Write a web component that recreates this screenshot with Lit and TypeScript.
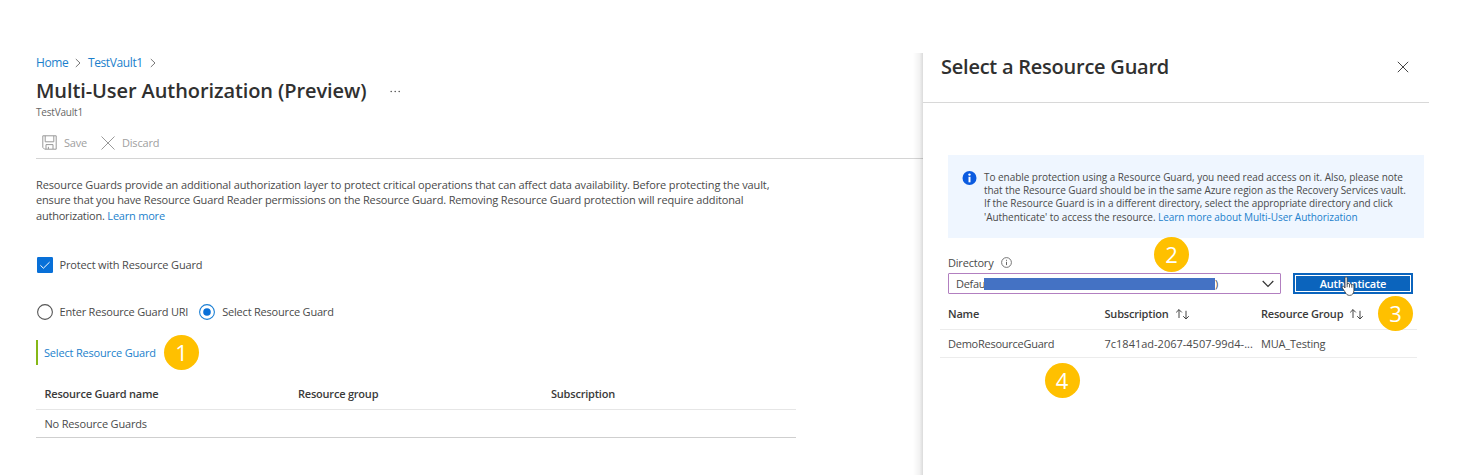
import { LitElement, html, css } from "lit";
import { customElement } from "lit/decorators.js";

const sortIcon = html`<svg class="sort" viewBox="0 0 15 12" width="15" height="12">
  <path d="M4 10V1.6M1.2 4.4L4 1.6l2.8 2.8M11 2.8v8.2M8.2 8.2l2.8 2.8 2.8-2.8" />
</svg>`;
const crumbIcon = html`<svg class="crumb" viewBox="0 0 6 10" width="6" height="10"><path d="M.8 1l4.2 4L.8 9" /></svg>`;

@customElement("app-root")
export class AppRoot extends LitElement {
  static styles = css`
    :host {
      display: block; position: relative; width: 1460px; height: 475px; overflow: hidden;
      background: #fff; color: #4a4a4a; font-family: "Open Sans", "Noto Sans", sans-serif; font-size: 11px;
    }
    * { box-sizing: border-box; }
    svg { display: block; fill: none; flex: none; }
    .page { display: grid; grid-template-columns: 923px 506px; padding-top: 53px; height: 475px; white-space: nowrap; }
    .link { color: #1b7fcc; }
    .main { padding-left: 36px; overflow: hidden; }
    .crumbs { display: flex; align-items: center; height: 19px; font-size: 12px; letter-spacing: -0.38px; }
    .crumb { stroke: #777; margin: 0 6.5px 0 7px; }
    .titlebar { display: flex; align-items: center; height: 36px; }
    h1, h2 { margin: 0; font-weight: 600; color: #303030; }
    h1 { font-size: 20px; letter-spacing: -0.09px; }
    .more { fill: #555; margin: 2px 0 0 24px; }
    .subtitle { height: 9px; line-height: 9px; font-size: 10px; color: #666; letter-spacing: -0.2px; }
    .toolbar { display: flex; align-items: center; margin-top: 10px; height: 32px; padding-left: 6px; border-bottom: 1px solid #d4d4d4; color: #a0a0a0; letter-spacing: -0.2px; }
    .toolbar svg { stroke: #999; }
    .save { margin: 0 14px 0 7px; }
    .discard { margin-left: 7px; }
    .copy { margin: 18px 0 0; line-height: 15.4px; }
    .c1 { letter-spacing: -0.12px; }
    .c2 { letter-spacing: -0.158px; }
    .c3 { letter-spacing: -0.21px; }
    .option { display: flex; align-items: center; height: 16px; padding-left: 0.5px; letter-spacing: -0.16px; }
    .check { margin-top: 34px; }
    .radios { margin-top: 31px; }
    .option span { margin: 0 0 2px 7px; }
    .option .second { margin-left: 11px; }
    .radios span { letter-spacing: -0.2px; }
    .pick { margin-top: 20px; height: 25px; border-left: 2px solid #86b817; padding-left: 6px; line-height: 25px; letter-spacing: -0.18px; }
    .grid { width: 760px; margin-top: 15px; }
    .row { display: grid; grid-template-columns: 253.5px 253px 1fr; padding-left: 8.5px; align-items: center; height: 28px; border-bottom: 1px solid #cfcfcf; letter-spacing: -0.17px; }
    .row.head { height: 30px; padding-bottom: 2px; font-weight: 600; border-color: #e6e6e6; color: #3a3a3a; letter-spacing: -0.21px; }
    .panel { position: relative; background: #fff; z-index: 1; }
    .panel::before { content: ""; position: absolute; left: -10px; top: 0; bottom: 0; width: 10px; background: linear-gradient(to left, rgba(0, 0, 0, .14), rgba(0, 0, 0, .05) 35%, transparent); }
    .panelhead { display: flex; justify-content: space-between; height: 50px; padding: 4px 20px 0 18px; border-bottom: 1px solid #d8d8d8; }
    h2 { font-size: 20px; line-height: 20px; letter-spacing: -0.24px; }
    .close { stroke: #444; margin-top: 4px; }
    .info { display: flex; margin: 52px 5px 0 25px; height: 83px; background: #eff6ff; padding: 16px 0 0 14px; font-size: 10px; line-height: 13.2px; }
    .infotext { margin-left: 7px; letter-spacing: -0.045px; }
    .i3 { letter-spacing: -0.052px; }
    .label { display: flex; align-items: center; margin: 15px 0 2px 25px; height: 18px; gap: 8px; letter-spacing: -0.2px; }
    .form { display: flex; margin-left: 25px; gap: 12px; }
    .select { display: flex; align-items: center; width: 333px; height: 21px; border: 1.5px solid #b27fc0; border-radius: 1px; padding: 0 6px 0 7px; }
    .def { width: 28px; letter-spacing: -0.3px; }
    .mask { width: 231px; height: 12px; background: #4472c4; z-index: 1; }
    .select svg { margin-left: auto; }
    .button { width: 120px; height: 21px; background: #0b64bd; border: 1px solid #0b64bd; outline: 1px solid #fff; outline-offset: -3px; color: #fff; font-weight: 600; text-align: center; line-height: 20px; letter-spacing: -0.2px; }
    .list { margin: 4px 12px 0 17px; }
    .item { display: grid; grid-template-columns: 156.5px 156.5px 1fr; align-items: center; height: 28px; padding-left: 8px; border-bottom: 1px solid #ececec; }
    .item.head { height: 32px; font-weight: 600; color: #3a3a3a; letter-spacing: -0.2px; }
    .guard { letter-spacing: -0.25px; }
    .group { letter-spacing: -0.2px; }
    .cell { display: flex; align-items: center; }
    .sort { stroke: #444; margin-left: 6px; }
    .badge { position: absolute; z-index: 2; width: 35px; height: 35px; border-radius: 50%; background: #ffc000; color: #fff; font-size: 22px; line-height: 35px; text-align: center; }
    .b1 { left: 164px; top: 335px; }
    .b2 { left: 1154px; top: 237px; }
    .b3 { left: 1378px; top: 296px; }
    .b4 { left: 1044.5px; top: 363px; }
    .cursor { position: absolute; z-index: 3; left: 1341px; top: 276px; }
  `;

  render() {
    return html`
      <div class="page">
        <main class="main">
          <nav class="crumbs"><span class="link">Home</span>${crumbIcon}<span class="link">TestVault1</span>${crumbIcon}</nav>
          <div class="titlebar">
            <h1>Multi-User Authorization (Preview)</h1>
            <svg class="more" width="11" height="3" viewBox="0 0 11 3"><circle cx="1.2" cy="1.5" r=".8" /><circle cx="5.2" cy="1.5" r=".8" /><circle cx="9.2" cy="1.5" r=".8" /></svg>
          </div>
          <div class="subtitle"><span>TestVault1</span></div>
          <div class="toolbar">
            <svg width="15" height="15" viewBox="0 0 15 15"><path d="M.8 .8h13.4v13.4H2.6L.8 12.4zM3.2 .8v6h8.6v-6M4 14V9.6h7V14M6.4 14v-2.2" /></svg>
            <span class="save">Save</span>
            <svg width="14" height="14" viewBox="0 0 14 14"><path d="M.5 .5l13 13M13.5 .5l-13 13" /></svg>
            <span class="discard">Discard</span>
          </div>
          <p class="copy"><span class="c1">Resource Guards provide an additional authorization layer to protect critical operations that can affect data availability. Before protecting the vault,</span><br /><span class="c2">ensure that you have Resource Guard Reader permissions on the Resource Guard. Removing Resource Guard protection will require additonal</span><br /><span class="c3">authorization. <span class="link">Learn more</span></span></p>
          <div class="option check">
            <svg width="16" height="16" viewBox="0 0 16 16"><rect width="16" height="16" rx="1.2" fill="#0870d8" /><path d="M3.4 8.3l3 2.9 6.2-6.1" stroke="#fff" /></svg>
            <span>Protect with Resource Guard</span>
          </div>
          <div class="option radios">
            <svg width="16" height="16" viewBox="0 0 16 16"><circle cx="8" cy="8" r="7.4" stroke="#555" stroke-width="1.1" /></svg>
            <span>Enter Resource Guard URI</span>
            <svg class="second" width="16" height="16" viewBox="0 0 16 16"><circle cx="8" cy="8" r="7.4" stroke="#1b7fd4" stroke-width="1.1" /><circle cx="8" cy="8" r="3.8" fill="#0870d8" /></svg>
            <span>Select Resource Guard</span>
          </div>
          <div class="pick link"><span>Select Resource Guard</span></div>
          <div class="grid">
            <div class="row head"><span>Resource Guard name</span><span>Resource group</span><span>Subscription</span></div>
            <div class="row"><span>No Resource Guards</span></div>
          </div>
        </main>
        <aside class="panel">
          <div class="panelhead">
            <h2>Select a Resource Guard</h2>
            <svg class="close" width="12" height="12" viewBox="0 0 12 12"><path d="M.8 .8l10.4 10.4M11.2 .8L.8 11.2" /></svg>
          </div>
          <div class="info">
            <svg width="15" height="15" viewBox="0 0 15 15"><circle cx="7.5" cy="7" r="7" fill="#0b5be0" /><circle cx="7.5" cy="3.6" r="1.2" fill="#fff" /><path d="M7.5 5.8v5.5" stroke="#fff" stroke-width="2" /></svg>
            <div class="infotext">
              <span class="i1">To enable protection using a Resource Guard, you need read access on it. Also, please note</span><br />
              <span class="i2">that the Resource Guard should be in the same Azure region as the Recovery Services vault.</span><br />
              <span class="i3">If the Resource Guard is in a different directory, select the appropriate directory and click</span><br />
              <span class="i4">'Authenticate' to access the resource. <span class="link">Learn more about Multi-User Authorization</span></span>
            </div>
          </div>
          <div class="label"><span>Directory</span>
            <svg width="11" height="11" viewBox="0 0 11 11"><circle cx="5.5" cy="5.5" r="4.9" stroke="#666" stroke-width=".9" /><path d="M5.5 4.8v3.3M5.5 2.8v1" stroke="#666" /></svg>
          </div>
          <div class="form">
            <div class="select"><span class="def">Defau</span><span class="mask"></span><span>)</span>
              <svg width="12" height="8" viewBox="0 0 12 8"><path d="M.7 1l5.3 5.4L11.3 1" stroke="#333" stroke-width="1.2" /></svg>
            </div>
            <div class="button"><span>Authenticate</span></div>
          </div>
          <div class="list">
            <div class="item head"><span>Name</span><span class="cell"><span>Subscription</span>${sortIcon}</span><span class="cell"><span>Resource Group</span>${sortIcon}</span></div>
            <div class="item"><span class="guard">DemoResourceGuard</span><span>7c1841ad-2067-4507-99d4-...</span><span class="group">MUA_Testing</span></div>
          </div>
        </aside>
      </div>
      <span class="badge b1">1</span><span class="badge b2">2</span><span class="badge b3">3</span><span class="badge b4">4</span>
      <svg class="cursor" width="15" height="21" viewBox="0 0 15 21"><path d="M4 12V2.2c0-1.8 2.2-1.8 2.2 0v6c.3-1.3 2.2-1.1 2.3.3.4-1.1 2.2-.9 2.3.5.6-.9 2.1-.5 2.1.8v4.6c0 2.8-1.5 5-4.2 5-2.5 0-3.5-1.3-4.7-3.5L1.3 12c-.8-1.6.9-2.5 1.9-1.2zM8.5 8.5v3M10.8 9v2.7M6.2 8v3.2" fill="#fff" stroke="#333" stroke-width=".8" /></svg>
    `;
  }
}
